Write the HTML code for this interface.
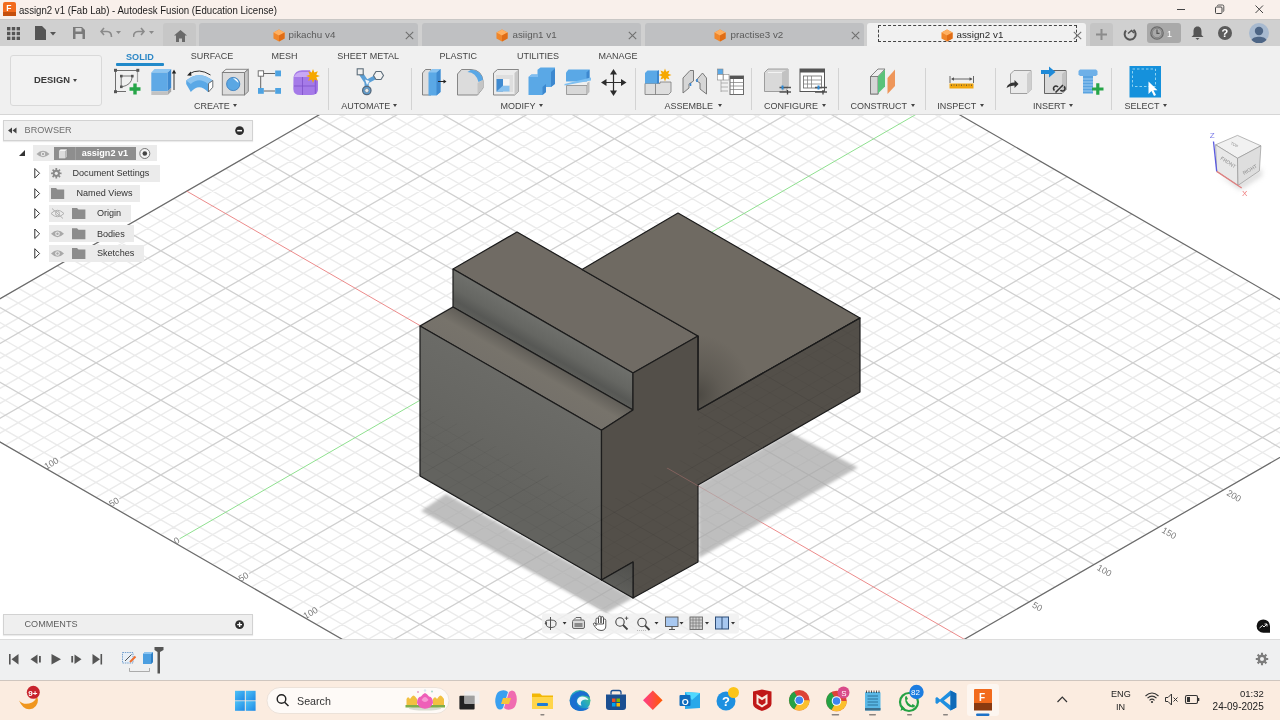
<!DOCTYPE html>
<html><head><meta charset="utf-8">
<style>
*{box-sizing:border-box;margin:0;padding:0}
html,body{width:1280px;height:720px;overflow:hidden;background:#fff;font-family:"Liberation Sans",sans-serif;color:#333}
.abs{position:absolute}
#title{left:0;top:0;width:1280px;height:20px;background:#f9f0eb}
#tabbar{left:0;top:19px;width:1280px;height:27px;background:#d0d0d0;box-shadow:inset 0 1px 0 #c9c7c5}
#toolbar{left:0;top:46px;width:1280px;height:69px;background:#f0f0f0;border-bottom:1px solid #d6d6d6}
#vp{left:0;top:0;width:1280px;height:720px}
#timeline{left:0;top:639px;width:1280px;height:41px;background:#eff0f1;border-top:1px solid #dcdcdc}
#taskbar{left:0;top:680px;width:1280px;height:40px;background:#fbece0;border-top:1px solid #cfc6bf}
.tab{top:4px;width:219px;height:23px;background:#bfc0c2;border-radius:3px 3px 0 0}
.tab.act{background:#f1f1f1}
.tab .cube{position:absolute;top:6px;width:12px;height:13px}
.tab .tt{position:absolute;top:7px;font-size:9.8px;color:#5a5a5a;white-space:nowrap;line-height:1}
.tab.act .tt{color:#2a2a2a}
.tab .x{position:absolute;left:206px;top:7.5px}
.tb{top:51.5px;font-size:9px;color:#444}
.gl{top:101.5px;font-size:9px;color:#444}
.tri{width:0;height:0;border-left:2.5px solid transparent;border-right:2.5px solid transparent;border-top:3px solid #444}
.rowbg{background:#ebebeb}
.br{font-size:9.1px;color:#333}
.t{position:absolute;white-space:nowrap;line-height:1}
</style></head>
<body><div id="wrap" style="position:absolute;left:0;top:0;width:1280px;height:720px;will-change:transform">
<svg id="vp" class="abs" width="1280" height="720" viewBox="0 0 1280 720">
<defs>
<clipPath id="vpclip"><rect x="0" y="115" width="1280" height="524"/></clipPath>
<linearGradient id="gUp" gradientUnits="userSpaceOnUse" x1="543" y1="321" x2="526.5" y2="349.5"><stop offset="0" stop-color="#6f706c"/><stop offset="0.5" stop-color="#656662"/><stop offset="0.8" stop-color="#575855"/><stop offset="1" stop-color="#5d5e5a"/></linearGradient>
<linearGradient id="gStep" gradientUnits="userSpaceOnUse" x1="543" y1="358.5" x2="526.7" y2="387"><stop offset="0" stop-color="#615e58"/><stop offset="0.45" stop-color="#77736b"/><stop offset="1" stop-color="#75716a"/></linearGradient>
<linearGradient id="gFL" gradientUnits="userSpaceOnUse" x1="520" y1="383" x2="470" y2="470"><stop offset="0" stop-color="#6b6b67"/><stop offset="1" stop-color="#63635f"/></linearGradient>
<radialGradient id="gAO" gradientUnits="userSpaceOnUse" cx="698" cy="395" r="60" gradientTransform="translate(698 395) scale(0.9 1) translate(-698 -395)"><stop offset="0" stop-color="#4a4741" stop-opacity="0.95"/><stop offset="0.45" stop-color="#4f4c46" stop-opacity="0.45"/><stop offset="1" stop-color="#4f4c46" stop-opacity="0"/></radialGradient>
<linearGradient id="gNotch" gradientUnits="userSpaceOnUse" x1="633" y1="562" x2="620" y2="595"><stop offset="0" stop-color="#4f4f4c"/><stop offset="1" stop-color="#60605c"/></linearGradient>
<clipPath id="below"><polygon points="420,402.5 601.5,506 698,450 698,410 860,318 860,392 698,485 698,562 633,598 601.5,580 420,476"/></clipPath>
<filter id="blur" x="-20%" y="-20%" width="140%" height="140%"><feGaussianBlur stdDeviation="1.8"/></filter>
</defs>
<g clip-path="url(#vpclip)">
<g id="grid">
<path id="gmin" d="M-124.3 370.4L639.4 -69.8M-111.4 377.8L652.4 -62.4M-98.4 385.3L665.3 -54.9M-72.5 400.2L691.3 -40.0M-59.5 407.7L704.2 -32.5M-46.6 415.2L717.2 -25.0M-33.6 422.7L730.1 -17.5M-7.7 437.6L756.1 -2.6M5.3 445.1L769.0 4.9M18.2 452.5L782.0 12.3M31.2 460.0L794.9 19.8M57.1 474.9L820.9 34.7M70.1 482.4L833.8 42.2M83.0 489.9L846.8 49.7M96.0 497.4L859.7 57.2M121.9 512.3L885.7 72.1M134.9 519.8L898.6 79.6M147.8 527.2L911.6 87.0M160.8 534.7L924.5 94.5M186.7 549.6L950.5 109.4M199.7 557.1L963.4 116.9M212.6 564.6L976.4 124.4M225.6 572.1L989.3 131.9M251.5 587.0L1015.3 146.8M264.5 594.5L1028.2 154.3M277.4 601.9L1041.2 161.7M290.4 609.4L1054.1 169.2M316.3 624.4L1080.1 184.1M329.3 631.8L1093.0 191.6M342.2 639.3L1106.0 199.1M355.2 646.8L1118.9 206.6M381.1 661.7L1144.9 221.5M394.1 669.2L1157.8 229.0M407.0 676.6L1170.8 236.4M420.0 684.1L1183.7 243.9M445.9 699.0L1209.7 258.8M458.9 706.5L1222.6 266.3M471.8 714.0L1235.6 273.8M484.8 721.5L1248.5 281.3M510.7 736.4L1274.5 296.2M523.7 743.9L1287.4 303.7M536.6 751.3L1300.4 311.1M549.6 758.8L1313.3 318.6M575.5 773.8L1339.3 333.5M588.5 781.2L1352.2 341.0M601.4 788.7L1365.2 348.5M614.4 796.2L1378.1 356.0M640.3 811.1L1404.1 370.9M653.3 818.6L1417.0 378.4M-124.3 370.4L653.3 818.6M-111.4 362.9L666.2 811.1M-98.4 355.4L679.2 803.6M-85.4 348.0L692.2 796.2M-59.5 333.0L718.1 781.2M-46.6 325.5L731.0 773.8M-33.6 318.1L744.0 766.3M-20.6 310.6L757.0 758.8M5.3 295.7L782.9 743.9M18.2 288.2L795.8 736.4M31.2 280.7L808.8 728.9M44.2 273.3L821.8 721.5M70.1 258.3L847.7 706.5M83.0 250.8L860.6 699.0M96.0 243.4L873.6 691.6M109.0 235.9L886.6 684.1M134.9 221.0L912.5 669.2M147.8 213.5L925.4 661.7M160.8 206.0L938.4 654.2M173.8 198.6L951.4 646.8M199.7 183.6L977.3 631.8M212.6 176.1L990.2 624.3M225.6 168.7L1003.2 616.9M238.6 161.2L1016.2 609.4M264.5 146.3L1042.1 594.5M277.4 138.8L1055.0 587.0M290.4 131.3L1068.0 579.5M303.4 123.9L1081.0 572.1M329.3 108.9L1106.9 557.1M342.2 101.4L1119.8 549.6M355.2 94.0L1132.8 542.2M368.2 86.5L1145.8 534.7M394.1 71.6L1171.7 519.8M407.0 64.1L1184.6 512.3M420.0 56.6L1197.6 504.8M433.0 49.2L1210.6 497.4M458.9 34.2L1236.5 482.4M471.8 26.7L1249.4 474.9M484.8 19.3L1262.4 467.5M497.8 11.8L1275.4 460.0M523.7 -3.1L1301.3 445.1M536.6 -10.6L1314.2 437.6M549.6 -18.1L1327.2 430.1M562.6 -25.5L1340.2 422.7M588.5 -40.5L1366.1 407.7M601.4 -48.0L1379.0 400.2M614.4 -55.4L1392.0 392.8M627.4 -62.9L1405.0 385.3" stroke="#ebebeb" stroke-width="1.4" fill="none"/>
<path id="gmaj" d="M-69.2 383.4L678.3 -47.4M-4.4 420.8L743.1 -10.1M60.4 458.1L807.9 27.3M119.3 498.9L872.7 64.6M248.9 573.6L1002.3 139.3M319.6 607.5L1067.1 176.7M384.4 644.9L1131.9 214.0M449.2 682.2L1196.7 251.4M514.0 719.6L1261.5 288.7M578.8 756.9L1326.3 326.1M643.6 794.3L1391.1 363.4M-72.5 340.5L705.1 788.7M-7.7 303.1L769.9 751.3M57.1 265.8L834.7 714.0M121.9 228.4L899.5 676.6M251.5 153.7L1029.1 601.9M316.3 116.4L1093.9 564.6M381.1 79.0L1158.7 527.2M445.9 41.7L1223.5 489.9M510.7 4.3L1288.3 452.5M575.5 -33.0L1353.1 415.2" stroke="#d0d0d0" stroke-width="1.3" fill="none"/>
<path d="M-124.3 370.4L653.3 818.6L1417.0 378.4L639.4 -69.8Z" stroke="#6a6a6a" stroke-width="1.2" fill="none"/>
<path id="gred" d="M186.7 191.1L964.3 639.3" stroke="#ec8b8b" stroke-width="1" fill="none"/>
<path d="M179.6 538.8L937.5 102.0" stroke="#8fe08f" stroke-width="1" fill="none"/>
<defs><path id="omin" d="M-124.3 370.4L639.4 -69.8M-111.4 377.8L652.4 -62.4M-98.4 385.3L665.3 -54.9M-72.5 400.2L691.3 -40.0M-59.5 407.7L704.2 -32.5M-46.6 415.2L717.2 -25.0M-33.6 422.7L730.1 -17.5M-7.7 437.6L756.1 -2.6M5.3 445.1L769.0 4.9M18.2 452.5L782.0 12.3M31.2 460.0L794.9 19.8M57.1 474.9L820.9 34.7M70.1 482.4L833.8 42.2M83.0 489.9L846.8 49.7M96.0 497.4L859.7 57.2M121.9 512.3L885.7 72.1M134.9 519.8L898.6 79.6M147.8 527.2L911.6 87.0M160.8 534.7L924.5 94.5M186.7 549.6L950.5 109.4M199.7 557.1L963.4 116.9M212.6 564.6L976.4 124.4M225.6 572.1L989.3 131.9M251.5 587.0L1015.3 146.8M264.5 594.5L1028.2 154.3M277.4 601.9L1041.2 161.7M290.4 609.4L1054.1 169.2M316.3 624.4L1080.1 184.1M329.3 631.8L1093.0 191.6M342.2 639.3L1106.0 199.1M355.2 646.8L1118.9 206.6M381.1 661.7L1144.9 221.5M394.1 669.2L1157.8 229.0M407.0 676.6L1170.8 236.4M420.0 684.1L1183.7 243.9M445.9 699.0L1209.7 258.8M458.9 706.5L1222.6 266.3M471.8 714.0L1235.6 273.8M484.8 721.5L1248.5 281.3M510.7 736.4L1274.5 296.2M523.7 743.9L1287.4 303.7M536.6 751.3L1300.4 311.1M549.6 758.8L1313.3 318.6M575.5 773.8L1339.3 333.5M588.5 781.2L1352.2 341.0M601.4 788.7L1365.2 348.5M614.4 796.2L1378.1 356.0M640.3 811.1L1404.1 370.9M653.3 818.6L1417.0 378.4M-124.3 370.4L653.3 818.6M-111.4 362.9L666.2 811.1M-98.4 355.4L679.2 803.6M-85.4 348.0L692.2 796.2M-59.5 333.0L718.1 781.2M-46.6 325.5L731.0 773.8M-33.6 318.1L744.0 766.3M-20.6 310.6L757.0 758.8M5.3 295.7L782.9 743.9M18.2 288.2L795.8 736.4M31.2 280.7L808.8 728.9M44.2 273.3L821.8 721.5M70.1 258.3L847.7 706.5M83.0 250.8L860.6 699.0M96.0 243.4L873.6 691.6M109.0 235.9L886.6 684.1M134.9 221.0L912.5 669.2M147.8 213.5L925.4 661.7M160.8 206.0L938.4 654.2M173.8 198.6L951.4 646.8M199.7 183.6L977.3 631.8M212.6 176.1L990.2 624.3M225.6 168.7L1003.2 616.9M238.6 161.2L1016.2 609.4M264.5 146.3L1042.1 594.5M277.4 138.8L1055.0 587.0M290.4 131.3L1068.0 579.5M303.4 123.9L1081.0 572.1M329.3 108.9L1106.9 557.1M342.2 101.4L1119.8 549.6M355.2 94.0L1132.8 542.2M368.2 86.5L1145.8 534.7M394.1 71.6L1171.7 519.8M407.0 64.1L1184.6 512.3M420.0 56.6L1197.6 504.8M433.0 49.2L1210.6 497.4M458.9 34.2L1236.5 482.4M471.8 26.7L1249.4 474.9M484.8 19.3L1262.4 467.5M497.8 11.8L1275.4 460.0M523.7 -3.1L1301.3 445.1M536.6 -10.6L1314.2 437.6M549.6 -18.1L1327.2 430.1M562.6 -25.5L1340.2 422.7M588.5 -40.5L1366.1 407.7M601.4 -48.0L1379.0 400.2M614.4 -55.4L1392.0 392.8M627.4 -62.9L1405.0 385.3" stroke="#000" stroke-width="1" fill="none"/>
<path id="omaj" d="M-69.2 383.4L678.3 -47.4M-4.4 420.8L743.1 -10.1M60.4 458.1L807.9 27.3M119.3 498.9L872.7 64.6M248.9 573.6L1002.3 139.3M319.6 607.5L1067.1 176.7M384.4 644.9L1131.9 214.0M449.2 682.2L1196.7 251.4M514.0 719.6L1261.5 288.7M578.8 756.9L1326.3 326.1M643.6 794.3L1391.1 363.4M-72.5 340.5L705.1 788.7M-7.7 303.1L769.9 751.3M57.1 265.8L834.7 714.0M121.9 228.4L899.5 676.6M251.5 153.7L1029.1 601.9M316.3 116.4L1093.9 564.6M381.1 79.0L1158.7 527.2M445.9 41.7L1223.5 489.9M510.7 4.3L1288.3 452.5M575.5 -33.0L1353.1 415.2" stroke="#000" stroke-width="1" fill="none"/></defs>
<text x="44.8" y="467.1" transform="rotate(-30 44.8 467.1)" text-anchor="start" dy="3.2" font-size="9" fill="#7a7a7a" font-family="Liberation Sans">100</text>
<text x="109.6" y="504.5" transform="rotate(-30 109.6 504.5)" text-anchor="start" dy="3.2" font-size="9" fill="#7a7a7a" font-family="Liberation Sans">50</text>
<text x="174.4" y="541.8" transform="rotate(-30 174.4 541.8)" text-anchor="start" dy="3.2" font-size="9" fill="#7a7a7a" font-family="Liberation Sans">0</text>
<text x="239.2" y="579.2" transform="rotate(-30 239.2 579.2)" text-anchor="start" dy="3.2" font-size="9" fill="#7a7a7a" font-family="Liberation Sans">50</text>
<text x="304.0" y="616.5" transform="rotate(-30 304.0 616.5)" text-anchor="start" dy="3.2" font-size="9" fill="#7a7a7a" font-family="Liberation Sans">100</text>
<text x="1033.0" y="604.2" transform="rotate(30 1033.0 604.2)" text-anchor="start" dy="3" font-size="9" fill="#7a7a7a" font-family="Liberation Sans">50</text>
<text x="1097.8" y="566.8" transform="rotate(30 1097.8 566.8)" text-anchor="start" dy="3" font-size="9" fill="#7a7a7a" font-family="Liberation Sans">100</text>
<text x="1162.6" y="529.5" transform="rotate(30 1162.6 529.5)" text-anchor="start" dy="3" font-size="9" fill="#7a7a7a" font-family="Liberation Sans">150</text>
<text x="1227.4" y="492.1" transform="rotate(30 1227.4 492.1)" text-anchor="start" dy="3" font-size="9" fill="#7a7a7a" font-family="Liberation Sans">200</text>
</g>
<g filter="url(#blur)" fill="#a9a9a9" opacity="0.75">
<polygon points="421,511 446,494 601,580 633,598 606,613"/>
<polygon points="698,485 790,432.5 858,467.5 699,558"/>
</g>
<g stroke="#1c1c1c" stroke-width="1.2" stroke-linejoin="round">
<polygon points="517,232 698,336 633,373 453,269" fill="#706b64"/>
<polygon points="582,269.4 678,213 860,318 698,410 698,336" fill="#6f6a62"/>
<polygon points="453,269 633,373 633,410 453,307" fill="url(#gUp)"/>
<polygon points="420,326 453,307 633,410 601.5,430.2" fill="url(#gStep)"/>
<polygon points="420,326 601.5,430.2 601.5,580 420,476" fill="url(#gFL)"/>
<polygon points="601.5,430.2 633,410 633,373 698,336 698,410 860,318 860,392 698,485 698,562 633,598 633,562 601.5,580" fill="#534f49"/>
<polygon points="601.5,580 633,562 633,598" fill="url(#gNotch)"/>
</g>
<polygon points="583,270 678,213 860,318 698,410 698,336" fill="url(#gAO)" stroke="none"/>
<g clip-path="url(#below)"><use href="#omin" opacity="0.035"/><use href="#omaj" opacity="0.07"/><use href="#gred" opacity="0.3"/></g>
<g stroke="#1c1c1c" stroke-width="1.2" fill="none" stroke-linejoin="round">
<path d="M698 336V410L860 318"/>
</g>
</g>
</svg>


<div id="title" class="abs">
 <svg class="abs" style="left:3px;top:2px" width="13" height="14" viewBox="0 0 13 14"><rect x="0" y="0" width="13" height="14" rx="2" fill="#f26b1d"/><rect x="0" y="10" width="13" height="4" fill="#c54f0c"/><text x="3.2" y="9" font-family="Liberation Sans" font-weight="700" font-size="8.5" fill="#fff">F</text></svg>
 <div class="t" style="left:19px;top:5px;font-size:9.65px;color:#1c1c1c;transform:scaleY(1.1);transform-origin:0 0">assign2 v1 (Fab Lab) - Autodesk Fusion (Education License)</div>
 <svg class="abs" style="left:1170px;top:0" width="110" height="20" viewBox="1170 0 110 20">
<path d="M1177 9.5H1185" stroke="#444" stroke-width="1"/>
<rect x="1215.5" y="7" width="6.5" height="6.5" rx="1" fill="none" stroke="#444" stroke-width="1"/>
<path d="M1217.5 6V5.8Q1217.5 5 1218.5 5H1222.5Q1223.8 5 1223.8 6.3V10.5Q1223.8 11.5 1223 11.5" stroke="#444" stroke-width="0.9" fill="none"/>
<path d="M1255.5 5.5L1263 13M1263 5.5L1255.5 13" stroke="#444" stroke-width="1"/>
</svg>
</div>
<div id="tabbar" class="abs">
 <svg class="abs" style="left:7px;top:8px" width="13" height="13"><g fill="#555"><rect x="0" y="0" width="3.4" height="3.4"/><rect x="4.8" y="0" width="3.4" height="3.4"/><rect x="9.6" y="0" width="3.4" height="3.4"/><rect x="0" y="4.8" width="3.4" height="3.4"/><rect x="4.8" y="4.8" width="3.4" height="3.4"/><rect x="9.6" y="4.8" width="3.4" height="3.4"/><rect x="0" y="9.6" width="3.4" height="3.4"/><rect x="4.8" y="9.6" width="3.4" height="3.4"/><rect x="9.6" y="9.6" width="3.4" height="3.4"/></g></svg>
 <svg class="abs" style="left:35px;top:7px" width="24" height="14"><path d="M0 0H7L11 4V14H0Z" fill="#555"/><path d="M15 6H21L18 9.5Z" fill="#555"/></svg>
 <svg class="abs" style="left:73px;top:8px" width="12" height="12"><path d="M0 0H9L12 3V12H0Z" fill="#7a7a7a"/><rect x="2.5" y="1" width="6" height="3.5" fill="#d2d2d2"/><rect x="2.5" y="7" width="7" height="5" fill="#d2d2d2"/></svg>
 <svg class="abs" style="left:100px;top:8px" width="24" height="12"><path d="M4 1L1 4.5L4 8M1.5 4.5H7C10 4.5 11.5 6.5 11.5 10" stroke="#8a8a8a" stroke-width="1.6" fill="none"/><path d="M16 4H21L18.5 7Z" fill="#8a8a8a"/></svg>
 <svg class="abs" style="left:133px;top:8px" width="24" height="12"><path d="M8 1L11 4.5L8 8M10.5 4.5H5C2 4.5 0.5 6.5 0.5 10" stroke="#8a8a8a" stroke-width="1.6" fill="none"/><path d="M16 4H21L18.5 7Z" fill="#8a8a8a"/></svg>
 <div class="abs" style="left:163px;top:4px;width:33px;height:23px;background:#c7c7c7;border-radius:3px 3px 0 0"></div>
 <svg class="abs" style="left:174px;top:11px" width="13" height="12"><path d="M6.5 0L13 5.5H11V12H8V8.5H5V12H2V5.5H0Z" fill="#6a6a6a"/></svg>
 <div class="abs tab" style="left:199px"><svg class="cube" style="left:73.5px" width="13" height="14" viewBox="0 0 13 14"><path d="M6.5 0.5L12.5 3.8V10.2L6.5 13.5L0.5 10.2V3.8Z" fill="#f0862a"/><path d="M6.5 0.5L12.5 3.8L6.5 7.1L0.5 3.8Z" fill="#ffb061"/><path d="M6.5 7.1L12.5 3.8V10.2L6.5 13.5Z" fill="#e06d16"/></svg><span class="tt" style="left:89.5px">pikachu v4</span><svg class="x" width="9" height="9" viewBox="0 0 9 9"><path d="M0.8 0.8L8.2 8.2M8.2 0.8L0.8 8.2" stroke="#707070" stroke-width="1.1"/></svg></div>
 <div class="abs tab" style="left:422px"><svg class="cube" style="left:74px" width="13" height="14" viewBox="0 0 13 14"><path d="M6.5 0.5L12.5 3.8V10.2L6.5 13.5L0.5 10.2V3.8Z" fill="#f0862a"/><path d="M6.5 0.5L12.5 3.8L6.5 7.1L0.5 3.8Z" fill="#ffb061"/><path d="M6.5 7.1L12.5 3.8V10.2L6.5 13.5Z" fill="#e06d16"/></svg><span class="tt" style="left:90.5px">asiign1 v1</span><svg class="x" width="9" height="9" viewBox="0 0 9 9"><path d="M0.8 0.8L8.2 8.2M8.2 0.8L0.8 8.2" stroke="#707070" stroke-width="1.1"/></svg></div>
 <div class="abs tab" style="left:645px"><svg class="cube" style="left:69px" width="13" height="14" viewBox="0 0 13 14"><path d="M6.5 0.5L12.5 3.8V10.2L6.5 13.5L0.5 10.2V3.8Z" fill="#f0862a"/><path d="M6.5 0.5L12.5 3.8L6.5 7.1L0.5 3.8Z" fill="#ffb061"/><path d="M6.5 7.1L12.5 3.8V10.2L6.5 13.5Z" fill="#e06d16"/></svg><span class="tt" style="left:85.5px">practise3 v2</span><svg class="x" width="9" height="9" viewBox="0 0 9 9"><path d="M0.8 0.8L8.2 8.2M8.2 0.8L0.8 8.2" stroke="#707070" stroke-width="1.1"/></svg></div>
 <div class="abs tab act" style="left:867px"><div class="abs" style="left:11px;top:2px;width:199px;height:17px;border:1px dashed #444"></div><svg class="cube" style="left:73.5px" width="13" height="14" viewBox="0 0 13 14"><path d="M6.5 0.5L12.5 3.8V10.2L6.5 13.5L0.5 10.2V3.8Z" fill="#f0862a"/><path d="M6.5 0.5L12.5 3.8L6.5 7.1L0.5 3.8Z" fill="#ffb061"/><path d="M6.5 7.1L12.5 3.8V10.2L6.5 13.5Z" fill="#e06d16"/></svg><span class="tt" style="left:89.5px">assign2 v1</span><svg class="x" width="9" height="9" viewBox="0 0 9 9"><path d="M0.8 0.8L8.2 8.2M8.2 0.8L0.8 8.2" stroke="#707070" stroke-width="1.1"/></svg></div>
 <div class="abs" style="left:1090px;top:4px;width:23px;height:23px;background:#c5c5c5;border-radius:3px 3px 0 0"></div>
 <svg class="abs" style="left:1096px;top:10px" width="11" height="11"><path d="M5.5 0V11M0 5.5H11" stroke="#8c8c8c" stroke-width="2"/></svg>
 <svg class="abs" style="left:1123px;top:8px" width="14" height="14"><path d="M3 3.5A5.5 5.5 0 1 0 10.5 2.8" stroke="#555" stroke-width="2" fill="none"/><path d="M5 6.5L8.5 3.5L11 6" stroke="#555" stroke-width="1.6" fill="none"/></svg>
 <div class="abs" style="left:1147px;top:4px;width:34px;height:20px;background:#a9a9a9;border-radius:3px"></div>
 <svg class="abs" style="left:1150px;top:7px" width="14" height="14"><circle cx="7" cy="7" r="6.2" fill="none" stroke="#6a6a6a" stroke-width="1.3"/><circle cx="7" cy="7" r="4.8" fill="none" stroke="#777" stroke-width="0.8"/><path d="M7 3.5V7.3H9.5" stroke="#555" stroke-width="1.2" fill="none"/></svg>
 <div class="t" style="left:1167px;top:11px;font-size:9px;color:#fff">1</div>
 <svg class="abs" style="left:1191px;top:7px" width="13" height="14"><path d="M6.5 0.5C3.5 0.5 2.5 3 2.5 5.5V9L0.5 11H12.5L10.5 9V5.5C10.5 3 9.5 0.5 6.5 0.5Z" fill="#555"/><path d="M4.5 12H8.5L6.5 14Z" fill="#555"/></svg>
 <svg class="abs" style="left:1218px;top:7px" width="14" height="14"><circle cx="7" cy="7" r="7" fill="#5b5b5b"/><text x="3.6" y="11.3" font-family="Liberation Sans" font-weight="700" font-size="11" fill="#fff">?</text></svg>
 <svg class="abs" style="left:1249px;top:4px" width="20" height="20"><circle cx="10" cy="10" r="10" fill="#a7b9cf"/><circle cx="10" cy="8" r="4.2" fill="#4d6585"/><path d="M2.5 17C4 12.5 16 12.5 17.5 17A10 10 0 0 1 2.5 17Z" fill="#4d6585"/></svg>
</div>
<div id="toolbar" class="abs"></div>
<div class="abs" style="left:10px;top:55px;width:92px;height:51px;border:1px solid #d9d9d9;border-radius:3px;background:#f2f2f2"></div>
<div class="t" style="left:34px;top:75px;font-size:9.4px;font-weight:700;color:#3a3a3a">DESIGN</div>
<div class="t tri" style="left:73px;top:79px"></div>
<div class="t" style="left:126px;top:51.5px;font-size:9.1px;font-weight:700;color:#2c87c6;transform:scaleY(1.08);transform-origin:0 0">SOLID</div>
<div class="abs" style="left:115.5px;top:63px;width:48.5px;height:2.7px;background:#2189c9;border-radius:1px"></div>
<div class="t tb" style="left:190.7px">SURFACE</div>
<div class="t tb" style="left:271.4px">MESH</div>
<div class="t tb" style="left:337.3px">SHEET METAL</div>
<div class="t tb" style="left:439.5px">PLASTIC</div>
<div class="t tb" style="left:517px">UTILITIES</div>
<div class="t tb" style="left:598.4px">MANAGE</div>
<div class="t gl" style="left:193.9px">CREATE</div><div class="t tri" style="left:232.5px;top:104px"></div>
<div class="t gl" style="left:341.2px">AUTOMATE</div><div class="t tri" style="left:393px;top:104px"></div>
<div class="t gl" style="left:500.6px">MODIFY</div><div class="t tri" style="left:539px;top:104px"></div>
<div class="t gl" style="left:664.5px">ASSEMBLE</div><div class="t tri" style="left:717.5px;top:104px"></div>
<div class="t gl" style="left:764px">CONFIGURE</div><div class="t tri" style="left:821.5px;top:104px"></div>
<div class="t gl" style="left:850.5px">CONSTRUCT</div><div class="t tri" style="left:911px;top:104px"></div>
<div class="t gl" style="left:937.3px">INSPECT</div><div class="t tri" style="left:979.5px;top:104px"></div>
<div class="t gl" style="left:1032.9px">INSERT</div><div class="t tri" style="left:1069px;top:104px"></div>
<div class="t gl" style="left:1124.5px">SELECT</div><div class="t tri" style="left:1162.5px;top:104px"></div>
<svg class="abs" style="left:0;top:0" width="1280" height="115" viewBox="0 0 1280 115">
<g stroke="#d3d3d3" stroke-width="1">
<path d="M328.5 68V110M411.5 68V110M635.5 68V110M751.5 68V110M838.5 68V110M925.5 68V110M995.5 68V110M1111.5 68V110"/>
</g>
<!-- sketch -->
<g>
<path d="M116 70.5H137.5M115.5 70V91.5M115.5 91.5H126" stroke="#6e6e6e" stroke-width="1"/>
<path d="M137.5 70V82" stroke="#a5a5a5" stroke-width="1.2"/>
<rect x="114" y="68.8" width="3" height="3" fill="#555"/><rect x="136.3" y="68.8" width="3" height="3" fill="#555"/><rect x="114" y="90.2" width="3" height="3" fill="#555"/>
<path d="M121.5 76H132M121.2 76V86.5M132.2 77Q131.5 85 122 86.8" stroke="#666" stroke-width="0.9" fill="none"/>
<rect x="120" y="74.8" width="2.6" height="2.6" fill="#555"/><rect x="131" y="74.8" width="2.6" height="2.6" fill="#555"/><rect x="120" y="85.5" width="2.6" height="2.6" fill="#555"/>
<path d="M129.5 89H140.5M135 83.5V94.5" stroke="#26a548" stroke-width="3.4"/>
</g>
<!-- extrude -->
<g>
<path d="M151.3 72.5L154.5 69H171.2L167.8 72.5Z" fill="#8ec6f2"/>
<rect x="151.3" y="72.5" width="16.5" height="18.8" fill="#5fa9e6"/>
<path d="M167.8 72.5L171.2 69V88L167.8 91.3Z" fill="#3f8ad0"/>
<path d="M151.3 91.3H167.8V95H151.3Z" fill="#c2c2c2"/><path d="M167.8 91.3L171.2 88V91.5L167.8 95Z" fill="#a8a8a8"/>
<path d="M174 90V72" stroke="#333" stroke-width="1"/><path d="M171.8 73.5H176.2L174 69.5Z" fill="#222"/>
</g>
<!-- revolve -->
<g>
<path d="M186.2 80.5Q199 70 212.8 80.5V87.2L208 92Q199 82.5 190.8 92L186.2 84Z" fill="#5aa8e6"/>
<path d="M186.2 80.5Q199 70 212.8 80.5L208 84Q199 76.5 190.8 84Z" fill="#8cc4f0"/>
<path d="M208.5 83.5L212.8 80.5V87.2L208.5 92Z" fill="#fff" stroke="#555" stroke-width="0.8"/>
<path d="M210.5 75Q199 67.5 189 74" stroke="#333" stroke-width="1" fill="none"/><path d="M187 75.5L190.8 71.5L191.5 75.8Z" fill="#222"/>
</g>
<!-- hole -->
<g stroke="#7d7d7d" stroke-width="0.9">
<path d="M222.3 72.5L226 69.3H248.3L244.5 72.5Z" fill="#efefef"/>
<rect x="222.3" y="72.5" width="22.2" height="22.5" fill="#dcdcdc"/>
<path d="M244.5 72.5L248.3 69.3V91.5L244.5 95Z" fill="#c6c6c6"/>
<circle cx="233.2" cy="84" r="6.6" fill="#5aa7e3" stroke="#3f81bf"/>
</g>
<path d="M233 78Q238 78.5 238.5 83Q235 80 233 78Z" fill="#fff"/>
<!-- pattern -->
<g>
<path d="M263.5 73.5H275M260.7 76V88M263.5 91H275" stroke="#555" stroke-width="0.9"/>
<rect x="258.2" y="70.8" width="5.4" height="5.4" fill="#fff" stroke="#666" stroke-width="0.9"/>
<rect x="275.2" y="70.5" width="5.8" height="5.8" fill="#4ea3e2"/>
<rect x="258" y="88" width="5.8" height="5.8" fill="#4ea3e2"/>
<rect x="275.2" y="88" width="5.8" height="5.8" fill="#4ea3e2"/>
</g>
<!-- form -->
<g>
<path d="M293.5 77Q295 70.5 302 70.3H310L313 78L318 80.5V90Q317.5 95 311 95H300Q293.5 95 293.3 89Z" fill="#a57ae8"/>
<path d="M294 77Q296 72 302 72H309L311 77Z" fill="#c9a8f5"/>
<path d="M302.5 77V95M294 86H316" stroke="#7d50c8" stroke-width="0.8"/>
<path d="M315.5 79V94" stroke="#8a5cd8" stroke-width="1.5"/>
<path d="M313 69L314.3 72.6L317.8 71.2L316.3 74.7L320 76L316.3 77.3L317.8 80.8L314.3 79.4L313 83L311.7 79.4L308.2 80.8L309.7 77.3L306 76L309.7 74.7L308.2 71.2L311.7 72.6Z" fill="#f6a800"/>
</g>
<!-- automate -->
<g>
<path d="M360.5 73L366.5 82L366.8 88M366.5 82L377.5 76" stroke="#5b9fd6" stroke-width="4.2" fill="none" stroke-linejoin="round"/>
<path d="M365 79.5L369.5 81L367 85Z" fill="#eef4fb"/>
<rect x="357.2" y="68.8" width="6" height="6" fill="#efefef" stroke="#5d6d7a" stroke-width="1.1"/>
<path d="M376 71.5L381 71.5L383.5 75.5L381 79.5L376 79.5L373.5 75.5Z" fill="#f3f3f3" stroke="#5d6d7a" stroke-width="1.1"/>
<circle cx="366.8" cy="90.5" r="4.2" fill="#5b9fd6" stroke="#56687a" stroke-width="1.3"/>
<circle cx="366.8" cy="90.5" r="2" fill="#e8eef4" stroke="#777" stroke-width="0.6"/>
</g>
<!-- press pull -->
<g>
<path d="M422.5 95V73L425.5 69.5H431V95Z" fill="#dedede" stroke="#777" stroke-width="0.9"/>
<path d="M428.5 72.5L432.5 69H440.5V92L436.5 95.5H428.5Z" fill="#5aa8e6"/>
<path d="M436.5 72.5L440.5 69V92L436.5 95.5Z" fill="#3f8ad0"/>
<path d="M428.5 72.5L432.5 69H440.5L436.5 72.5Z" fill="#8cc4f0"/>
<path d="M438 81.5H444" stroke="#222" stroke-width="1"/><path d="M443.5 79.5L446.5 81.5L443.5 83.5Z" fill="#222"/>
</g>
<!-- fillet -->
<g>
<path d="M457.5 95V74L461.5 69.5H471Q482 70 483 81V88L477.5 95Z" fill="#dcdcdc" stroke="#7a7a7a" stroke-width="0.9"/>
<path d="M467.5 72Q476 72.5 478.5 82L483 80Q481 70 471 69.8Z" fill="#5aa8e6"/>
<path d="M477.5 83L483 80V88L477.5 95Z" fill="#c5c5c5"/>
</g>
<!-- shell -->
<g>
<path d="M493.5 95V73L497.5 69.5H518.5V91.5L514.5 95Z" fill="#ececec" stroke="#7a7a7a" stroke-width="0.9"/>
<path d="M514.5 73L518.5 69.5V91.5L514.5 95Z" fill="#c8c8c8"/>
<rect x="496" y="75" width="17" height="17" fill="#dedede"/>
<rect x="496.5" y="79" width="6.5" height="12.5" fill="#3f8ad0"/>
<path d="M496.5 91.5L503 85.5H509.5V91.5Z" fill="#88c1ef"/>
<rect x="503" y="79" width="6.5" height="6.5" fill="#f5f5f5"/>
</g>
<!-- combine -->
<g>
<path d="M537.5 69.8L540.5 67.5H555L554.5 84L551 87H537.5Z" fill="#5aa8e6"/>
<path d="M551 72L555 68.5V84L551 87Z" fill="#3d88cf"/>
<path d="M528.5 77L531.5 74.5H546V92L542.5 95H528.5Z" fill="#5aa8e6"/>
<path d="M542.5 87L546 84V92L542.5 95Z" fill="#3d88cf"/>
<path d="M528.5 77L531.5 74.5H538V77Z" fill="#80bdf0"/>
</g>
<!-- split -->
<g>
<path d="M566 72.5L568.5 69.5H589.5V79L586.5 81.5H566Z" fill="#5aa8e6"/>
<path d="M586.5 72.5L589.5 69.5V79L586.5 81.5Z" fill="#3d88cf"/>
<path d="M564.5 84L591 77.5V80.5L564.5 85.5Z" fill="#7ec0f2"/>
<path d="M566.5 85.5H587V94.5H566.5Z" fill="#d8d8d8" stroke="#8a8a8a" stroke-width="0.8"/>
<path d="M587 83L589.5 81.5V92L587 94.5Z" fill="#bdbdbd"/>
</g>
<!-- move -->
<g fill="#2b2b2b">
<path d="M613.5 72V93M603 82.5H624" stroke="#2b2b2b" stroke-width="1.2"/>
<path d="M613.5 69L617 74.5H610Z"/><path d="M613.5 96L617 90.5H610Z"/><path d="M601 82.5L606.5 79V86Z"/><path d="M626.5 82.5L621 79V86Z"/>
</g>
<!-- new component -->
<g>
<path d="M645 83.5V94.5H668.5L671 92V82H660V83.5Z" fill="#dedede" stroke="#7a7a7a" stroke-width="0.8"/>
<path d="M655.5 83.5V94.5" stroke="#7a7a7a" stroke-width="0.8"/>
<path d="M645 73L647.5 70.5H658.5V83.5H645Z" fill="#5aa8e6"/>
<path d="M657 71.5L659 70V83L657 83.5Z" fill="#3d88cf"/>
<path d="M665 68.5L666.2 71.8L669.5 70.5L668.2 73.8L671.5 75L668.2 76.2L669.5 79.5L666.2 78.2L665 81.5L663.8 78.2L660.5 79.5L661.8 76.2L658.5 75L661.8 73.8L660.5 70.5L663.8 71.8Z" fill="#f6a800"/>
</g>
<!-- joint -->
<g stroke="#6e6e6e" stroke-width="0.9">
<path d="M683 93V78L690 70.5L693.5 70.5V81L689 84V88Z" fill="#d6d6d6"/>
<path d="M696 80.5L702.5 73L706.5 78V94L700 89V83Z" fill="#d6d6d6"/>
</g>
<path d="M690.5 83V86M697 79V82" stroke="#3d88cf" stroke-width="1.6"/>
<!-- bom -->
<g>
<rect x="717.5" y="69" width="5.5" height="5.5" fill="#5aa8e6" stroke="#888" stroke-width="0.6"/>
<rect x="717.5" y="74.5" width="5.5" height="5.5" fill="#fff" stroke="#888" stroke-width="0.6"/>
<rect x="723.5" y="74.5" width="5.5" height="5.5" fill="#fff" stroke="#888" stroke-width="0.6"/>
<path d="M721 80V92M721 83H728M721 87H728M721 91H728" stroke="#999" stroke-width="0.7"/>
<rect x="730" y="76" width="13.5" height="18.5" fill="#fff" stroke="#6a6a6a" stroke-width="1"/>
<rect x="730" y="76" width="13.5" height="3" fill="#555"/>
<path d="M730 82.5H743.5M730 86H743.5M730 89.5H743.5M733.5 79V94.5" stroke="#777" stroke-width="0.7"/>
</g>
<!-- configure 1 -->
<g>
<path d="M764.5 91.5V72.5L768 69H788V86L786 91.5Z" fill="#d9d9d9" stroke="#8a8a8a" stroke-width="0.8"/>
<path d="M782 72.5L788 69V86L782 91.5Z" fill="#c2c2c2"/>
<path d="M768 72.5H782" stroke="#f3f3f3" stroke-width="1"/>
<path d="M779.5 87.5H791M779.5 92H791" stroke="#555" stroke-width="1.4"/>
<path d="M782.5 85.5V89.5" stroke="#2d8ad6" stroke-width="2"/><path d="M787.5 90V94.5" stroke="#444" stroke-width="1.3"/>
</g>
<!-- configure 2 -->
<g>
<rect x="800" y="69" width="24.5" height="22.5" fill="#fff" stroke="#555" stroke-width="1"/>
<rect x="800" y="69" width="24.5" height="3.5" fill="#555"/>
<rect x="803.5" y="76" width="18" height="12" fill="#fff" stroke="#666" stroke-width="0.8"/>
<path d="M803.5 80H821.5M803.5 84H821.5M807.5 76V88M811.5 76V88" stroke="#777" stroke-width="0.7"/>
<path d="M815 87.5H827M815 92H827" stroke="#555" stroke-width="1.4"/>
<path d="M818.5 85.5V89.5" stroke="#2d8ad6" stroke-width="2"/><path d="M823 90V94.5" stroke="#444" stroke-width="1.3"/>
</g>
<!-- construct -->
<g>
<path d="M870.5 94V76.5L878 69H885L878 76.5V94Z" fill="#eee" stroke="#777" stroke-width="0.9"/>
<rect x="870.5" y="76.5" width="7.5" height="17.5" fill="#d6d6d6" stroke="#777" stroke-width="0.9"/>
<path d="M878 76.5L885 69.5V86.5L878 93.5Z" fill="#5bc27a"/>
<path d="M887.5 78L895 69.5V86L887.5 94Z" fill="#ee965a"/>
</g>
<!-- inspect -->
<g>
<path d="M950 76V83M973.5 76V83" stroke="#666" stroke-width="1"/>
<path d="M952 79H971.5" stroke="#555" stroke-width="0.9"/><path d="M951 79L954 77.3V80.7Z" fill="#555"/><path d="M972.5 79L969.5 77.3V80.7Z" fill="#555"/>
<rect x="949.5" y="83.5" width="24" height="5" fill="#f2a70e"/>
<path d="M951.5 84.5V86M954 84.5V85.5M956.5 84.5V86M959 84.5V85.5M961.5 84.5V86M964 84.5V85.5M966.5 84.5V86M969 84.5V85.5M971.5 84.5V86" stroke="#444" stroke-width="0.7"/>
</g>
<!-- insert 1 -->
<g>
<path d="M1010.5 93.5V74L1014 70.5H1031V89.5L1027 93.5Z" fill="#eaeaea" stroke="#8a8a8a" stroke-width="0.8"/>
<path d="M1027 74L1031 70.5V89.5L1027 93.5Z" fill="#cfcfcf"/>
<path d="M1006.5 88Q1008 82.5 1014.5 82.5V80L1018.5 84L1014.5 88V85.5Q1009.5 85.5 1006.5 88Z" fill="#333"/>
</g>
<!-- insert 2 -->
<g>
<path d="M1044.5 93.5V74L1048 70.5H1066V89.5L1062 93.5Z" fill="#dadada" stroke="#555" stroke-width="0.9"/>
<path d="M1062 74L1066 70.5V89.5L1062 93.5Z" fill="#c2c2c2"/>
<path d="M1041 70H1049V66.5L1055.5 72L1049 77.5V74H1041Z" fill="#1f8ad8"/>
<path d="M1055.5 92.5L1063 85M1058 87A2.5 2.5 0 1 0 1054.5 90.5M1060.5 90A2.5 2.5 0 1 0 1064 86.5" stroke="#333" stroke-width="1.6" fill="none"/>
</g>
<!-- insert 3 -->
<g>
<path d="M1078.5 71L1080 69.5H1096L1097.5 71V74.5L1096 76H1080L1078.5 74.5Z" fill="#6eb0e8"/>
<rect x="1083" y="76" width="10" height="17.5" fill="#5aa3e0"/>
<path d="M1083 79H1093M1083 82H1093M1083 85H1093M1083 88H1093M1083 91H1093" stroke="#a8d2f5" stroke-width="0.9"/>
<path d="M1092 89H1103.5M1097.8 83.2V94.8" stroke="#26a548" stroke-width="3.2"/>
</g>
<!-- select -->
<g>
<rect x="1129.5" y="66" width="31.5" height="31.5" fill="#1591dc"/>
<rect x="1132.5" y="69" width="23" height="17.5" fill="none" stroke="#8fd3f3" stroke-width="1" stroke-dasharray="2.5 2"/>
<path d="M1148.5 81.5V94L1151.5 91L1154 96L1156 95L1153.5 90.2H1157.5Z" fill="#fff"/>
</g>
</svg>
<div id="timeline" class="abs"></div>
<!-- browser panel -->
<div class="abs" style="left:3px;top:120px;width:250px;height:21px;background:#efefef;border:1px solid #d2d2d2;box-shadow:0 1px 1px rgba(0,0,0,0.08)"></div>
<svg class="abs" style="left:8px;top:127px" width="10" height="8"><path d="M0 3.5L4 0.5V6.5Z M4.5 3.5L8.5 0.5V6.5Z" fill="#444"/></svg>
<div class="t" style="left:24.6px;top:126px;font-size:9.1px;color:#6e6e6e">BROWSER</div>
<svg class="abs" style="left:235px;top:126px" width="10" height="10"><circle cx="4.6" cy="4.6" r="4.4" fill="#2e2e2e"/><rect x="2.2" y="3.9" width="4.8" height="1.5" fill="#fff"/></svg>
<svg class="abs" style="left:18px;top:149px" width="8" height="8"><path d="M7 1V7H1Z" fill="#333"/></svg>
<div class="abs rowbg" style="left:33px;top:145px;width:124px;height:16px"></div>
<svg class="abs" style="left:35.5px;top:149.5px" width="14" height="8"><path d="M0.5 4Q7 -2.5 13.5 4Q7 10.5 0.5 4Z" fill="#aaa"/><circle cx="7" cy="4" r="2.2" fill="#ececec"/><circle cx="7" cy="4" r="1.2" fill="#aaa"/></svg>
<div class="abs" style="left:54px;top:147px;width:82px;height:13px;background:#8e8e8e"></div>
<svg class="abs" style="left:57px;top:147.5px" width="13" height="12"><path d="M1.5 3L3.5 1H10.5L8.5 3Z" fill="#f4f4f4"/><rect x="1.5" y="3" width="7" height="7.8" fill="#dcdcdc"/><path d="M8.5 3L10.5 1V8.8L8.5 10.8Z" fill="#bcbcbc"/><path d="M1.5 10.8V3L3.5 1H10.5V8.8L8.5 10.8Z" fill="none" stroke="#777" stroke-width="0.6"/></svg>
<div class="abs" style="left:75px;top:147px;width:1px;height:13px;background:#a0a0a0"></div>
<div class="t" style="left:81.7px;top:149px;font-size:9.07px;font-weight:700;color:#fff">assign2 v1</div>
<svg class="abs" style="left:139px;top:148px" width="12" height="12"><circle cx="5.8" cy="5.5" r="5" fill="#f4f4f4" stroke="#777" stroke-width="1"/><circle cx="5.8" cy="5.5" r="2.3" fill="#444"/></svg>

<div class="abs rowbg" style="left:49px;top:165px;width:111px;height:17px"></div>
<div class="abs rowbg" style="left:49px;top:185px;width:91px;height:17px"></div>
<div class="abs rowbg" style="left:49px;top:205px;width:82px;height:17px"></div>
<div class="abs rowbg" style="left:49px;top:225px;width:85px;height:17px"></div>
<div class="abs rowbg" style="left:49px;top:245px;width:95px;height:17px"></div>
<svg class="abs" style="left:0;top:0" width="160" height="265">
<g fill="none" stroke="#333" stroke-width="1"><path d="M34.8 168.5V178L39.6 173.3Z"/><path d="M34.8 188.7V198.3L39.6 193.5Z"/><path d="M34.8 208.7V218.3L39.6 213.5Z"/><path d="M34.8 229V238.5L39.6 233.8Z"/><path d="M34.8 248.7V258.3L39.6 253.5Z"/></g>
<path d="M59.80 172.11L59.91 172.51L61.52 172.39L61.52 174.21L59.91 174.09L59.80 174.49L59.62 174.93L59.42 175.29L60.64 176.35L59.35 177.64L58.29 176.42L57.93 176.62L57.49 176.80L57.09 176.91L57.21 178.52L55.39 178.52L55.51 176.91L55.11 176.80L54.67 176.62L54.31 176.42L53.25 177.64L51.96 176.35L53.18 175.29L52.98 174.93L52.80 174.49L52.69 174.09L51.08 174.21L51.08 172.39L52.69 172.51L52.80 172.11L52.98 171.67L53.18 171.31L51.96 170.25L53.25 168.96L54.31 170.18L54.67 169.98L55.11 169.80L55.51 169.69L55.39 168.08L57.21 168.08L57.09 169.69L57.49 169.80L57.93 169.98L58.29 170.18L59.35 168.96L60.64 170.25L59.42 171.31L59.62 171.67Z" fill="#8a8a8a"/><circle cx="56.3" cy="173.3" r="1.6" fill="#ebebeb"/>
<g fill="#8c8c8c"><path d="M51 188H56L57.5 189.5H64.2V199H51Z"/><path d="M72 208H77L78.5 209.5H85.4V219H72Z"/><path d="M72 228.2H77L78.5 229.7H85.4V239.2H72Z"/><path d="M72 248H77L78.5 249.5H85.4V259H72Z"/></g>
<g><path d="M51 213.5Q57.5 207 64 213.5Q57.5 220 51 213.5Z" fill="none" stroke="#b0b0b0" stroke-width="1"/><circle cx="57.5" cy="213.5" r="2" fill="none" stroke="#b0b0b0" stroke-width="1"/><path d="M52 208.5L63 218.5" stroke="#b0b0b0" stroke-width="1"/></g>
<g><path d="M51 233.8Q57.5 227 64 233.8Q57.5 240.5 51 233.8Z" fill="#a9a9a9"/><circle cx="57.5" cy="233.8" r="2.3" fill="#ececec"/><circle cx="57.5" cy="233.8" r="1.2" fill="#a9a9a9"/></g>
<g><path d="M51 253.5Q57.5 246.8 64 253.5Q57.5 260.2 51 253.5Z" fill="#a9a9a9"/><circle cx="57.5" cy="253.5" r="2.3" fill="#ececec"/><circle cx="57.5" cy="253.5" r="1.2" fill="#a9a9a9"/></g>
</svg>
<div class="t br" style="left:72.5px;top:169px">Document Settings</div>
<div class="t br" style="left:76.5px;top:189px">Named Views</div>
<div class="t br" style="left:96.9px;top:209px">Origin</div>
<div class="t br" style="left:96.9px;top:229.5px">Bodies</div>
<div class="t br" style="left:96.9px;top:249px">Sketches</div>

<!-- comments -->
<div class="abs" style="left:3px;top:614px;width:250px;height:21px;background:#efefef;border:1px solid #d2d2d2;box-shadow:0 1px 1px rgba(0,0,0,0.08)"></div>
<div class="t" style="left:24.5px;top:620px;font-size:9.1px;color:#5e5e5e">COMMENTS</div>
<svg class="abs" style="left:235px;top:620px" width="10" height="10"><circle cx="4.6" cy="4.6" r="4.4" fill="#2e2e2e"/><path d="M2.2 4.6H7M4.6 2.2V7" stroke="#fff" stroke-width="1.4"/></svg>

<!-- navbar -->
<svg class="abs" style="left:0;top:600px" width="1280" height="40" viewBox="0 600 1280 40">
<rect x="542" y="613.5" width="197" height="20" rx="3" fill="#f0f0f0" opacity="0.85"/>
<g stroke="#555" stroke-width="1" fill="none">
<path d="M550.5 617V630M546 623.5Q544 620 550.5 620Q557 620 556 624M546 623.5Q546 627.5 551 627.5Q556 627.5 556 624"/>
</g>
<path d="M544.5 623.5L547 621.5V625.5Z" fill="#555"/>
<path d="M562.7 622H566.5L564.6 624.5Z" fill="#333"/>
<g stroke="#666" stroke-width="1" fill="#d9d9d9"><rect x="572.5" y="620" width="12" height="8.5" rx="1.5"/></g>
<path d="M574 619.5L576 617.5H581V620" stroke="#666" fill="none"/><rect x="574.5" y="623" width="8" height="4" fill="#8a8a8a"/>
<path d="M596 626V619.5Q596 618 597.3 618Q598.5 618 598.5 619.5V623M598.5 623V617.5Q598.5 616 599.8 616Q601 616 601 617.5V623M601 623V618Q601 616.5 602.2 616.5Q603.5 616.5 603.5 618V624M603.5 624V620Q603.5 619 604.5 619Q605.8 619 605.8 620.5V626Q605.8 630.5 601 630.5Q597.5 630.5 595.5 627.5L593.5 624.5Q593 623.5 594 623Q595 622.5 596 624Z" fill="#fff" stroke="#444" stroke-width="0.9"/>
<g stroke="#444" fill="none" stroke-width="1.1"><circle cx="620" cy="622" r="4.2"/><path d="M623 625L627.5 629.5" stroke-width="1.8"/><path d="M626.5 616.5V620M624.8 618.2H628.3" stroke-width="0.8"/></g>
<g stroke="#444" fill="none" stroke-width="1.1"><circle cx="642" cy="622.5" r="4.2"/><path d="M645 625.5L649.5 630" stroke-width="1.8"/></g>
<path d="M637 630.5H646" stroke="#999" stroke-width="0.6" stroke-dasharray="1 1"/>
<path d="M654.5 622H658.5L656.5 624.5Z" fill="#333"/>
<rect x="665.5" y="617" width="12.5" height="9.5" fill="#a8c8f0" stroke="#555" stroke-width="0.9"/><path d="M669 629.5H675M672 626.5V629.5" stroke="#555" stroke-width="1.2"/>
<path d="M679.5 622H683.5L681.5 624.5Z" fill="#333"/>
<rect x="690" y="617" width="12.5" height="12.5" fill="#cfcfcf" stroke="#666" stroke-width="0.9"/>
<path d="M693 617V629.5M696 617V629.5M699 617V629.5M690 620H702.5M690 623H702.5M690 626H702.5" stroke="#777" stroke-width="0.7"/>
<path d="M705 622H709L707 624.5Z" fill="#333"/>
<rect x="715.5" y="617" width="13" height="12" fill="#a8c8f0" stroke="#2f4e78" stroke-width="1"/><path d="M722 617V629" stroke="#2f4e78" stroke-width="1"/>
<path d="M731 622H735L733 624.5Z" fill="#333"/>
<path d="M1270 632.8H1263.3A6.7 6.7 0 1 1 1270 626.1Z" fill="#111"/>
<path d="M1259.5 628L1262.5 625.5L1264 627L1267 624M1264.5 624H1267V626.5" stroke="#fff" stroke-width="0.9" fill="none"/>
</svg>

<!-- viewcube -->
<svg class="abs" style="left:1200px;top:125px" width="75" height="75" viewBox="1200 125 75 75">
<defs><filter id="vcs" x="-50%" y="-50%" width="200%" height="200%"><feGaussianBlur stdDeviation="2.5"/></filter></defs>
<path d="M1219 175L1240 190L1262 176L1262 168L1240 182Z" fill="#bbb" opacity="0.5" filter="url(#vcs)"/>
<path d="M1237.5 135.4L1260.9 145.8L1237.5 158.3L1215.6 144.8Z" fill="#f1f1f1" stroke="#8a8a8a" stroke-width="0.6"/>
<path d="M1215.6 144.8L1237.5 158.3L1238 185.4L1216.7 171.4Z" fill="#e8e8e8" stroke="#8a8a8a" stroke-width="0.6"/>
<path d="M1237.5 158.3L1260.9 145.8L1259.4 170.8L1238 185.4Z" fill="#dedede" stroke="#8a8a8a" stroke-width="0.6"/>
<path d="M1213.5 141.5L1216.7 171.4" stroke="#5a5ae0" stroke-width="1.3"/>
<path d="M1216.7 171.4L1241.7 188" stroke="#e08080" stroke-width="1.3"/>
<text x="1209.8" y="138" font-family="Liberation Sans" font-size="8" fill="#7a7ae8">Z</text>
<text x="1242" y="196" font-family="Liberation Sans" font-size="8" fill="#ee7a7a">X</text>
<text x="1230" y="147" font-family="Liberation Sans" font-size="4" fill="#888" transform="rotate(25 1236 146)">TOP</text>
<text x="1219" y="163" font-family="Liberation Sans" font-size="5" fill="#888" transform="rotate(32 1226 163)">FRONT</text>
<text x="1241" y="172" font-family="Liberation Sans" font-size="5" fill="#888" transform="rotate(-30 1248 168)">RIGHT</text>
</svg>

<!-- timeline -->
<svg class="abs" style="left:0;top:640px" width="1280" height="40" viewBox="0 640 1280 40">
<g fill="#555">
<rect x="9" y="654" width="1.6" height="10.5"/><path d="M18.5 654V664.5L11.5 659.3Z"/>
<path d="M37.5 654.5V664L30.5 659.3Z"/><rect x="39" y="656" width="1.8" height="6.5"/>
<path d="M51.5 654V664.5L61 659.3Z"/>
<rect x="71.3" y="656" width="1.8" height="6.5"/><path d="M74.5 654.5V664L81.5 659.3Z"/>
<path d="M92.5 654V664.5L100 659.3Z"/><rect x="100.5" y="654" width="1.6" height="10.5"/>
</g>
<rect x="122.5" y="652.5" width="10.5" height="10.5" fill="#e8f0f8" stroke="#5a8fc8" stroke-width="0.8" stroke-dasharray="1.5 0.8"/>
<path d="M125 661L131.5 654.5" stroke="#555" stroke-width="1"/><path d="M130 662L135.5 656.5" stroke="#f07030" stroke-width="2"/>
<path d="M143 654L145 652H153V662L151 664H143Z" fill="#4b9ee0"/><path d="M151 654L153 652V662L151 664Z" fill="#2f7fc4"/><path d="M143 654L145 652H153L151 654Z" fill="#8cc4f0"/>
<path d="M129.5 668V671.5H149.5V668" stroke="#999" stroke-width="0.8" fill="none"/>
<path d="M154.5 647H163.5V650L160 652V673.5H157.5V652L154.5 650Z" fill="#555"/>
<path d="M1266.17 657.58L1266.30 658.06L1268.21 657.92L1268.21 660.08L1266.30 659.94L1266.17 660.42L1265.95 660.94L1265.71 661.37L1267.15 662.62L1265.62 664.15L1264.37 662.71L1263.94 662.95L1263.42 663.17L1262.94 663.30L1263.08 665.21L1260.92 665.21L1261.06 663.30L1260.58 663.17L1260.06 662.95L1259.63 662.71L1258.38 664.15L1256.85 662.62L1258.29 661.37L1258.05 660.94L1257.83 660.42L1257.70 659.94L1255.79 660.08L1255.79 657.92L1257.70 658.06L1257.83 657.58L1258.05 657.06L1258.29 656.63L1256.85 655.38L1258.38 653.85L1259.63 655.29L1260.06 655.05L1260.58 654.83L1261.06 654.70L1260.92 652.79L1263.08 652.79L1262.94 654.70L1263.42 654.83L1263.94 655.05L1264.37 655.29L1265.62 653.85L1267.15 655.38L1265.71 656.63L1265.95 657.06Z" fill="#7c7c7c"/><circle cx="1262" cy="659" r="2" fill="#eff0f1"/>
</svg>

<div id="taskbar" class="abs"></div>
<svg class="abs" style="left:0;top:680px" width="1280" height="40" viewBox="0 680 1280 40">
<defs>
<linearGradient id="diam" x1="0" y1="0" x2="1" y2="0"><stop offset="0" stop-color="#ff3d8a"/><stop offset="1" stop-color="#ff5a00"/></linearGradient>
<linearGradient id="edge" x1="1" y1="0" x2="0" y2="1"><stop offset="0" stop-color="#5fd36a"/><stop offset="0.5" stop-color="#1fa3c8"/><stop offset="1" stop-color="#0f5fc0"/></linearGradient>
<linearGradient id="win" x1="0" y1="0" x2="1" y2="1"><stop offset="0" stop-color="#4fc3f7"/><stop offset="1" stop-color="#1e88e5"/></linearGradient>
</defs>
<!-- weather -->
<path d="M19 700.5Q24 706 32 702.5Q36 700 37 696Q40 704 33 708.5Q24 712 19 700.5Z" fill="#f0961e"/>
<circle cx="33.3" cy="692.3" r="6.5" fill="#c8232c"/>
<text x="28.3" y="695.7" font-family="Liberation Sans" font-size="8" font-weight="700" fill="#fff">9+</text>
<!-- windows -->
<rect x="235" y="690.8" width="9.8" height="9.6" fill="url(#win)"/><rect x="245.8" y="690.8" width="9.8" height="9.6" fill="url(#win)"/>
<rect x="235" y="701.2" width="9.8" height="9.6" fill="url(#win)"/><rect x="245.8" y="701.2" width="9.8" height="9.6" fill="url(#win)"/>
<!-- search -->
<rect x="267" y="687.5" width="182" height="26" rx="13" fill="#fefaf7" stroke="#e7ddd4" stroke-width="0.8"/>
<circle cx="281.5" cy="699" r="4.3" fill="none" stroke="#222" stroke-width="1.4"/><path d="M284.6 702.2L288.5 706" stroke="#222" stroke-width="1.5"/>
<text x="297" y="704.5" font-family="Liberation Sans" font-size="10.7" fill="#333">Search</text>
<ellipse cx="425" cy="708.5" rx="16" ry="2" fill="#d8dcd0"/>
<path d="M406.5 706V699Q408 695.5 410 699L411.5 697Q413.5 694 415.5 697L417 699V706Z" fill="#f2c040"/>
<path d="M433 706V699Q435 695.5 437 699L438.5 697Q440.5 694 442.5 697L444 699V706Z" fill="#f2c040"/>
<path d="M405.5 705H445V707.5H405.5Z" fill="#7fae4a"/>
<path d="M417 703Q417 697 421 696.5Q423 693.5 425 693Q427 693.5 429 696.5Q433 697 433 703Q431 708.5 425 708.8Q419 708.5 417 703Z" fill="#ee5fb8"/>
<path d="M421.5 700Q425 694 428.5 700Q425 704 421.5 700Z" fill="#f79ad4"/>
<circle cx="418" cy="692" r="1" fill="#e8a0c8"/><circle cx="432" cy="691.5" r="1" fill="#a8d8c8"/><circle cx="425" cy="690.5" r="1.2" fill="#d8e8f0"/>
<!-- task view -->
<rect x="459.4" y="695.7" width="15.2" height="13.8" rx="1" fill="#222"/>
<rect x="464.4" y="691.2" width="15" height="12.6" rx="1" fill="#f0f0f0" opacity="0.85"/>
<rect x="464.4" y="695.7" width="10.2" height="8.1" fill="#a0a0a0"/>
<!-- copilot -->
<path d="M500 691Q505 689 508 692L503 708Q500 711 497 708Q494 702 496 696Q497 692 500 691Z" fill="#3aa0f0"/>
<path d="M512 709Q507 711 504 708L509 692Q512 689 515 692Q518 698 516 704Q515 708 512 709Z" fill="#f06bb0"/>
<path d="M503 698H511L509 704H501Z" fill="#f6c63c"/>
<!-- explorer -->
<path d="M532 693.5H540L542 695.5H553V709H532Z" fill="#f2b705"/>
<rect x="532" y="697" width="21" height="12" fill="#ffd54a"/>
<rect x="537" y="703" width="11" height="3" rx="1" fill="#1e7cd6"/>
<rect x="540.3" y="714" width="4.2" height="1.5" rx="0.7" fill="#8a8480"/>
<!-- edge -->
<circle cx="580" cy="700.5" r="10.5" fill="url(#edge)"/>
<path d="M570 702Q571 693 580 691Q588 690.5 590 698Q587 695 582 695.5Q576 696.5 576.5 702.5Q577.5 708.5 585 708.5Q589 708 590 706.5Q587 711 580 711Q571 710 570 702Z" fill="#1a6fd0"/>
<path d="M577 702Q577 697 582 696.5Q587 696.5 588.5 700Q585 699 583 700Q579.5 702 581.5 705.5Q579 706 577 702Z" fill="#fff" opacity="0.9"/>
<!-- store -->
<path d="M606 694.5H626V707Q626 710 623 710H609Q606 710 606 707Z" fill="#1b4f91"/>
<path d="M611 694.5V692.5Q611 690.5 613 690.5H619Q621 690.5 621 692.5V694.5" stroke="#1b4f91" stroke-width="1.3" fill="none"/>
<rect x="612" y="698.5" width="3.5" height="3.5" fill="#f25022"/><rect x="616.5" y="698.5" width="3.5" height="3.5" fill="#7fba00"/>
<rect x="612" y="703" width="3.5" height="3.5" fill="#00a4ef"/><rect x="616.5" y="703" width="3.5" height="3.5" fill="#ffb900"/>
<!-- diamond -->
<path d="M652.8 690.5L662.6 700.3L652.8 710.1L643 700.3Z" fill="url(#diam)"/>
<!-- outlook -->
<path d="M685 692L700 693V708L685 709Z" fill="#28a8ea"/>
<path d="M685 692L700 693L692 700Z" fill="#50d9ff"/>
<rect x="679.5" y="695" width="11" height="11" rx="1" fill="#0f6cbd"/>
<text x="681.8" y="704.5" font-family="Liberation Sans" font-size="9" font-weight="700" fill="#fff">O</text>
<!-- help -->
<circle cx="726" cy="701" r="9.5" fill="#1e90e0"/>
<text x="722" y="706" font-family="Liberation Sans" font-size="13" font-weight="700" fill="#fff">?</text>
<circle cx="733.5" cy="692.5" r="5.5" fill="#fcc419"/>
<!-- mcafee -->
<path d="M753 691.5L762 689.5L771.5 691.5V704Q771.5 708 762 711Q753 708 753 704Z" fill="#c01818"/>
<path d="M756.5 694L762 697.5L767.5 694V704L762 707.5L756.5 704Z" fill="#f9ebe0"/>
<path d="M758.5 698L762 700.3L765.5 698V703L762 705.3L758.5 703Z" fill="#c01818"/>
<!-- chrome -->
<g transform="translate(799.3 700.3)">
<circle r="10.3" fill="#dd4437"/>
<path d="M0 0L10.3 0A10.3 10.3 0 0 1 -5.15 8.92Z" fill="#fbc02d"/>
<path d="M0 0L-5.15 8.92A10.3 10.3 0 0 1 -5.15 -8.92Z" fill="#25a244"/>
<circle r="4.8" fill="#fff"/><circle r="3.8" fill="#3f86f2"/>
</g>
<g transform="translate(836.5 701)">
<circle r="10.3" fill="#dd4437"/>
<path d="M0 0L10.3 0A10.3 10.3 0 0 1 -5.15 8.92Z" fill="#fbc02d"/>
<path d="M0 0L-5.15 8.92A10.3 10.3 0 0 1 -5.15 -8.92Z" fill="#25a244"/>
<circle r="4.8" fill="#fff"/><circle r="3.8" fill="#3f86f2"/>
</g>
<circle cx="843.5" cy="692.5" r="6" fill="#d94b8a"/>
<text x="841.2" y="695.6" font-family="Liberation Sans" font-size="8" fill="#fff">S</text>
<rect x="831.6" y="714" width="7.6" height="1.5" rx="0.7" fill="#8a8480"/>
<!-- notepad -->
<rect x="865" y="692" width="15.5" height="18.5" rx="1" fill="#5ab8e6"/>
<rect x="865" y="708" width="15.5" height="2.5" fill="#3d6f8c"/>
<path d="M867.5 696H878M867.5 699H878M867.5 702H878M867.5 705H878" stroke="#1f5f85" stroke-width="0.8"/>
<path d="M866.5 690.5V693M869 690.5V693M871.5 690.5V693M874 690.5V693M876.5 690.5V693M879 690.5V693" stroke="#333" stroke-width="0.8"/>
<rect x="869" y="714" width="7" height="1.5" rx="0.7" fill="#8a8480"/>
<!-- whatsapp -->
<circle cx="909" cy="702" r="9" fill="none" stroke="#25a244" stroke-width="2.2"/>
<path d="M900.5 711L902 705.5L905 708.5Z" fill="#25a244"/>
<path d="M905 698Q905 696 906.5 696L908 699L906.5 700Q908 704 911.5 705.5L912.5 704L915 705.5Q915 707.5 913 707.5Q905 707 905 698Z" fill="#25a244"/>
<circle cx="916.5" cy="692" r="7.2" fill="#1d7de0"/>
<text x="911" y="695" font-family="Liberation Sans" font-size="8" fill="#fff">82</text>
<rect x="907" y="714" width="5" height="1.5" rx="0.7" fill="#8a8480"/>
<!-- vscode -->
<path d="M950.5 690.5L956.3 693.5V707.5L950.5 710.5L940 701.5L937 704L935.5 703V698L937 697L940 699.5Z" fill="#1f8fe0"/>
<path d="M950.5 695.5V705.5L944 700.5Z" fill="#f9ebe0"/>
<path d="M950.5 690.5L956.3 693.5V707.5L950.5 710.5Z" fill="#0f6ab8"/>
<rect x="943" y="714" width="5" height="1.5" rx="0.7" fill="#8a8480"/>
<!-- fusion active -->
<rect x="967" y="684" width="32" height="32" rx="3" fill="#fdf6f0"/>
<path d="M974 690Q974 689 975 689H991Q992 689 992 690V708H974Z" fill="#f26b1d"/>
<rect x="974" y="703" width="18" height="7.5" fill="#8a3a10"/>
<text x="979" y="701" font-family="Liberation Sans" font-size="10" font-weight="700" fill="#fff">F</text>
<rect x="976" y="713.5" width="13.5" height="2.5" rx="1.2" fill="#1e72c8"/>
<!-- tray -->
<path d="M1057.5 702L1062.3 697L1067 702" stroke="#333" stroke-width="1.2" fill="none"/>
<text x="1111" y="697" font-family="Liberation Sans" font-size="9.1" fill="#222">ENG</text>
<text x="1116" y="710" font-family="Liberation Sans" font-size="9.1" fill="#222">IN</text>
<g stroke="#333" fill="none" stroke-width="1.1"><path d="M1145.5 696Q1152 690 1158.5 696"/><path d="M1147.5 698.2Q1152 694 1156.5 698.2"/><path d="M1149.5 700.3Q1152 698 1154.5 700.3"/></g>
<circle cx="1152" cy="702" r="1.1" fill="#333"/>
<path d="M1165.5 697.5H1168L1171.5 694V705L1168 701.5H1165.5Z" fill="none" stroke="#333" stroke-width="1"/>
<path d="M1173.5 697.5L1177.5 701.5M1177.5 697.5L1173.5 701.5" stroke="#333" stroke-width="1"/>
<rect x="1185.5" y="695.5" width="12" height="8" rx="1.5" fill="none" stroke="#333" stroke-width="1.1"/>
<rect x="1197.8" y="698" width="1.5" height="3" fill="#333"/><rect x="1187" y="697" width="3" height="5" fill="#333"/>
<text x="1240" y="697" font-family="Liberation Sans" font-size="9.5" fill="#222">01:32</text>
<text x="1212.6" y="710" font-family="Liberation Sans" font-size="10" fill="#222">24-09-2025</text>
</svg>

</div></body></html>
